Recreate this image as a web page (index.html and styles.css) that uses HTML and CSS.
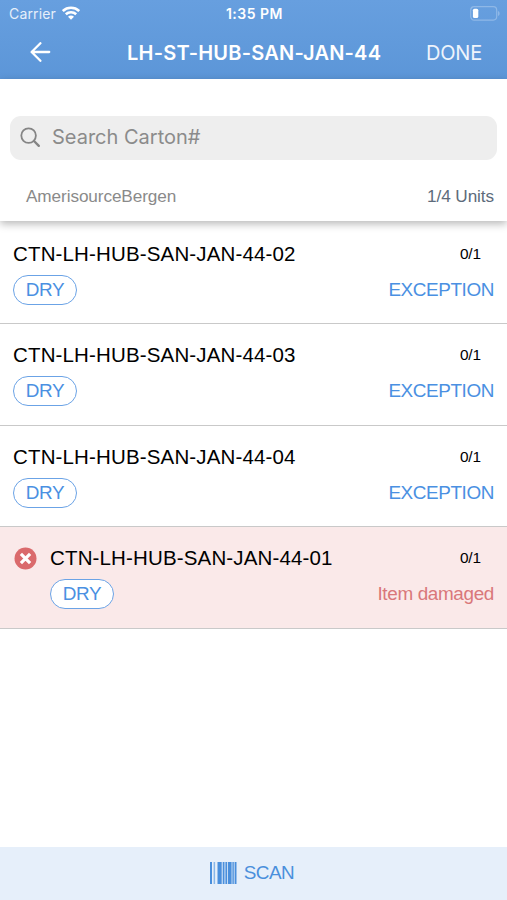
FILE: index.html
```
<!DOCTYPE html>
<html lang="en">
<head>
    <meta charset="UTF-8">
    <meta name="viewport" content="width=device-width, initial-scale=1.0">
    <title>Cartons</title>
    <link rel="stylesheet" href="styles.css">
</head>
<body>

    <header class="header">
        <div class="status-bar">
            <div class="carrier">
                <span>Carrier</span>
                <svg width="18" height="15" viewBox="0 0 18 15" fill="none" stroke="#fff" stroke-width="2.6">
                    <path d="M.8 5C5.4 .7 12.6 .7 17.2 5"/>
                    <path d="M3.8 8.2C6.8 5.5 11.2 5.5 14.2 8.2"/>
                    <path d="M9 13.8L6 10.7C7.8 9.1 10.2 9.1 12 10.7Z" fill="#fff" stroke="none"/>
                </svg>
            </div>
            <div class="time">1:35 PM</div>
            <div class="battery">
                <svg width="31" height="15" viewBox="0 0 31 15">
                    <rect x="1.7" y=".7" width="26" height="13.4" rx="3.5" fill="none" stroke="#8fb8e7" stroke-width="1.2"/>
                    <rect x="3.9" y="2.7" width="5.4" height="9.4" rx="1.6" fill="#fff"/>
                    <path d="M29 5v5c2.2-.9 2.2-4.1 0-5z" fill="#8fb8e7"/>
                </svg>
            </div>
        </div>
        <div class="nav-bar">
            <svg class="back" width="22" height="20" viewBox="0 0 22 20" fill="none" stroke="#fff" stroke-width="2.3" stroke-linecap="round" stroke-linejoin="round">
                <path d="M10.4 1.2L1.6 10l8.8 8.8M2 10H19.2"/>
            </svg>
            <h1 class="title">LH-ST-HUB-SAN-JAN-44</h1>
            <div class="done">DONE</div>
        </div>
    </header>

    <section class="search-panel">
        <div class="search-box">
            <svg width="22" height="22" viewBox="0 0 22 22" fill="none" stroke="#858585" stroke-linecap="round">
                <circle cx="8.6" cy="8.6" r="7.3" stroke-width="1.8"/>
                <path d="M14 14L18.8 18.8" stroke-width="2.4"/>
            </svg>
            <span class="placeholder">Search Carton#</span>
        </div>
        <div class="summary">
            <span class="customer">AmerisourceBergen</span>
            <span class="units">1/4 Units</span>
        </div>
    </section>

    <main class="list">
        <div class="item">
            <div class="item-body">
                <div class="line"><span class="carton">CTN-LH-HUB-SAN-JAN-44-02</span><span class="count">0/1</span></div>
                <div class="line second"><span class="tag">DRY</span><span class="action">EXCEPTION</span></div>
            </div>
        </div>
        <div class="item">
            <div class="item-body">
                <div class="line"><span class="carton">CTN-LH-HUB-SAN-JAN-44-03</span><span class="count">0/1</span></div>
                <div class="line second"><span class="tag">DRY</span><span class="action">EXCEPTION</span></div>
            </div>
        </div>
        <div class="item">
            <div class="item-body">
                <div class="line"><span class="carton">CTN-LH-HUB-SAN-JAN-44-04</span><span class="count">0/1</span></div>
                <div class="line second"><span class="tag">DRY</span><span class="action">EXCEPTION</span></div>
            </div>
        </div>
        <div class="item damaged">
            <svg class="error-icon" width="23" height="23" viewBox="0 0 23 23">
                <circle cx="11.5" cy="11.5" r="11" fill="#da6a6c"/>
                <path d="M6.9 6.9l9.2 9.2M16.1 6.9l-9.2 9.2" stroke="#fff" stroke-width="3.2"/>
            </svg>
            <div class="item-body">
                <div class="line"><span class="carton">CTN-LH-HUB-SAN-JAN-44-01</span><span class="count">0/1</span></div>
                <div class="line second"><span class="tag">DRY</span><span class="action reason">Item damaged</span></div>
            </div>
        </div>
    </main>

    <footer class="scan-bar">
        <svg width="27" height="22" viewBox="0 0 27 22" fill="#4a8fdc">
            <rect x="0" width="2" height="22"/>
            <rect x="3.6" width="1.5" height="22" opacity=".6"/>
            <rect x="7.5" width="4.2" height="22"/>
            <rect x="12.7" width="1.8" height="22"/>
            <rect x="15.4" width="1.8" height="22"/>
            <rect x="18" width="3.6" height="22"/>
            <rect x="22.4" width="1.4" height="22"/>
            <rect x="24.6" width="1.9" height="22"/>
        </svg>
        <span class="scan-label">SCAN</span>
    </footer>

</body>
</html>
```
FILE: styles.css
```
body {
    font-family: "Liberation Sans", Arial, sans-serif;
    display: flex;
    flex-direction: column;
    margin: 0;
    height: 100vh;
    overflow: hidden;
    background-color: #fff;
}
svg {
    display: block;
    flex: none;
}
.header {
    height: 79px;
    flex: none;
    color: #fff;
    background: linear-gradient(#679fdf, #5c96d8);
    font-family: Inter, sans-serif;
}
.status-bar {
    display: grid;
    grid-template-columns: 1fr auto 1fr;
    align-items: center;
    height: 27px;
    padding: 0 7px 0 9px;
}
.carrier {
    display: flex;
    align-items: center;
    gap: 6px;
    font-size: 14px;
    letter-spacing: 0.15px;
    color: #e6effa;
}
.time {
    font-size: 14px;
    font-weight: 600;
    letter-spacing: 0.5px;
}
.battery {
    justify-self: end;
}
.nav-bar {
    display: grid;
    grid-template-columns: 97px 1fr 97px;
    align-items: center;
    height: 50px;
    padding: 0 25px 0 30px;
}
.title {
    margin: 2px 0 0;
    font-size: 20px;
    font-weight: 600;
    line-height: 24px;
    letter-spacing: 0.22px;
    white-space: nowrap;
}
.done {
    justify-self: end;
    padding-top: 1px;
    font-size: 20px;
    letter-spacing: -0.2px;
    color: #eef4fc;
}
.search-panel {
    position: relative;
    height: 142px;
    flex: none;
    box-sizing: border-box;
    padding: 37px 10px 0;
    background-color: #fff;
    box-shadow: 0 3px 8px rgba(0,0,0,0.28);
}
.search-box {
    display: flex;
    align-items: center;
    gap: 10px;
    height: 44px;
    padding-left: 10px;
    border-radius: 11px;
    background-color: #eee;
}
.placeholder {
    padding-bottom: 2px;
    font-family: Inter, sans-serif;
    font-size: 20px;
    color: #8b8b8b;
}
.summary {
    display: flex;
    justify-content: space-between;
    padding: 26px 3px 0 16px;
    font-size: 17.2px;
    line-height: 20px;
    letter-spacing: -0.1px;
    color: #8a8a8a;
}
.units {
    color: #5d6b7b;
}
.list {
    flex: 1;
    padding-top: 2px;
}
.item {
    display: flex;
    height: 101.4px;
    box-sizing: border-box;
    padding: 19px 13px 0;
    border-bottom: 1px solid #c9c9c9;
}
.item-body {
    flex: 1;
}
.line {
    display: flex;
    justify-content: space-between;
    align-items: center;
    height: 24px;
}
.carton {
    font-size: 20.5px;
    letter-spacing: 0.15px;
    color: #000;
}
.count {
    padding-right: 13px;
    font-size: 15.4px;
    letter-spacing: -0.1px;
    color: #000;
}
.second {
    height: 30px;
    margin-top: 9px;
}
.tag {
    width: 64px;
    height: 30px;
    box-sizing: border-box;
    border: 1.4px solid #6ba3e6;
    border-radius: 15px;
    background-color: #fff;
    font-size: 18.9px;
    line-height: 28px;
    letter-spacing: -0.3px;
    text-align: center;
    color: #4a90e2;
}
.action {
    font-size: 18.9px;
    letter-spacing: -0.4px;
    color: #4a90e2;
}
.damaged {
    background-color: #fae9e9;
}
.error-icon {
    margin: 1px 13px 0 1px;
}
.reason {
    letter-spacing: -0.35px;
    color: #d9777a;
}
.scan-bar {
    display: flex;
    justify-content: center;
    align-items: center;
    gap: 7px;
    height: 53px;
    flex: none;
    box-sizing: border-box;
    padding: 0 3px 1px 0;
    background-color: #e6effa;
}
.scan-label {
    font-size: 18.9px;
    letter-spacing: -0.5px;
    color: #4a8fdc;
}
```
